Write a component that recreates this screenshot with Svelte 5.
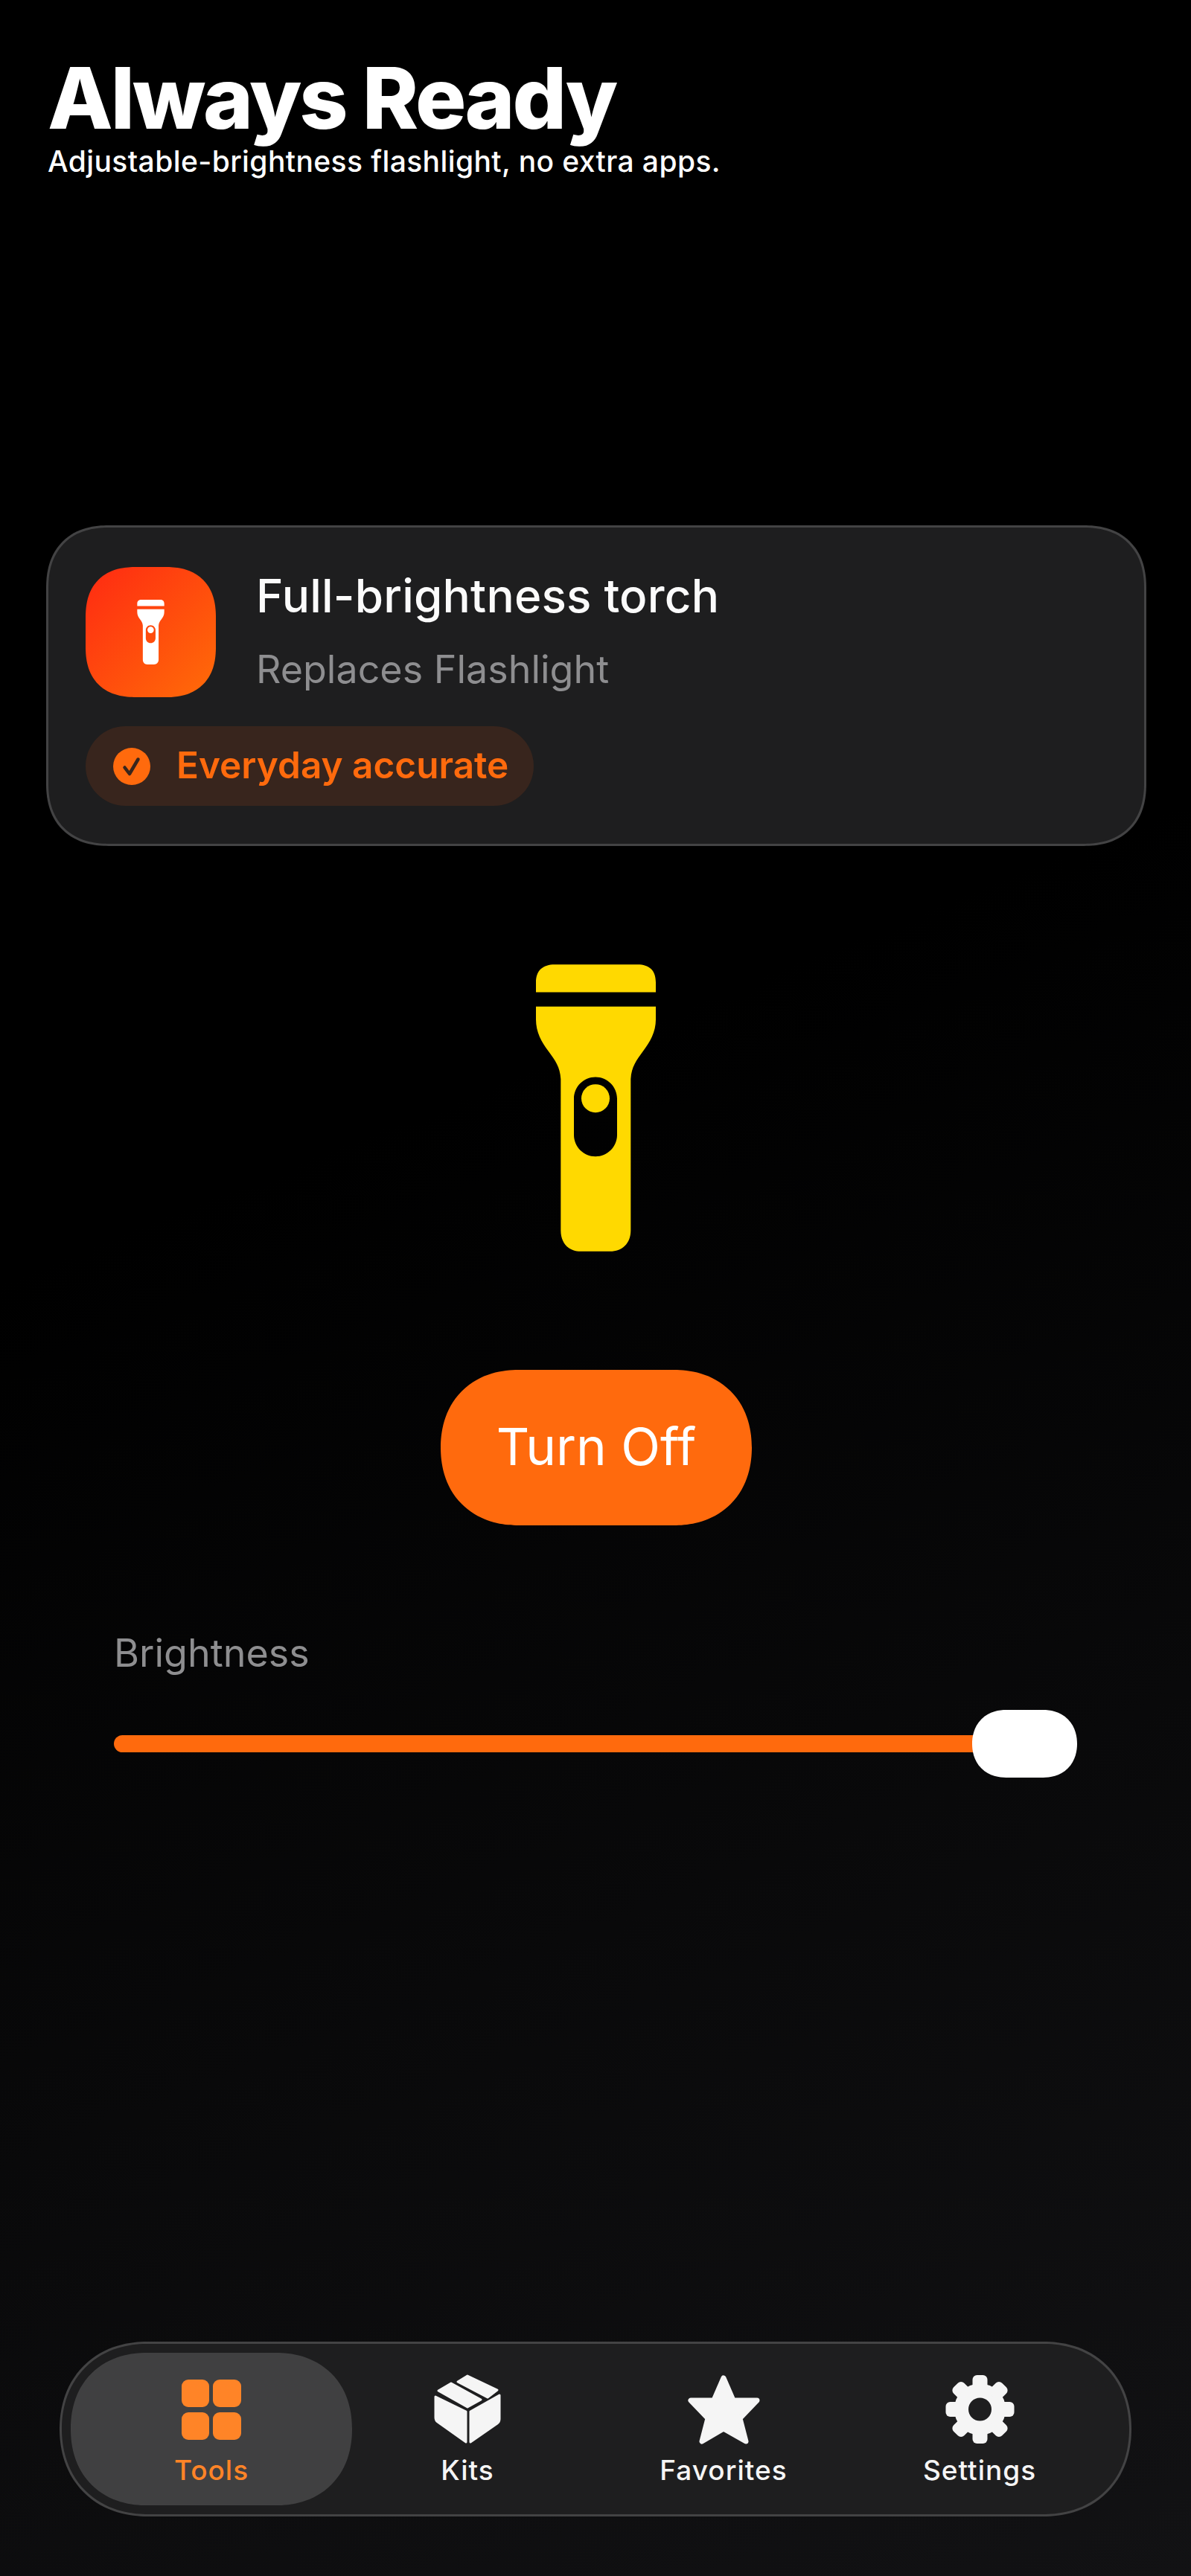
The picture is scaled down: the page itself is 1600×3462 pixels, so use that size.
<script>
  const tabs = [
    { id: 'tools', label: 'Tools', active: true },
    { id: 'kits', label: 'Kits' },
    { id: 'star', label: 'Favorites' },
    { id: 'gear', label: 'Settings' }
  ];
  const teeth = [0, 45, 90, 135, 180, 225, 270, 315];
  const torch = 'M180 190V150C180 100 210 78 255 78H590C635 78 663 100 663 150V190ZM180 248H663V300C663 350 640 390 610 430C585 465 565 490 562 540V1150C562 1205 525 1235 480 1235H360C315 1235 280 1205 280 1150V540C277 490 257 465 232 430C202 390 180 350 180 300ZM420 532C372 532 333 571 333 619V765C333 813 372 852 420 852C468 852 507 813 507 765V619C507 571 468 532 420 532Z';
</script>

<div class="page">
  <header>
    <h1>Always Ready</h1>
    <p>Adjustable-brightness flashlight, no extra apps.</p>
  </header>

  <section class="card">
    <div class="top">
      <div class="app">
        <svg class="mini" viewBox="180 78 483 1157"><path d={torch} fill="#fff" fill-rule="evenodd" /><circle cx="420" cy="618" r="57" fill="#fff" /></svg>
      </div>
      <div class="txt">
        <h2>Full-brightness torch</h2>
        <p>Replaces Flashlight</p>
      </div>
    </div>
    <div class="badge">
      <svg viewBox="0 0 50 50" class="chk"><circle cx="25" cy="25" r="25" fill="#ff6a0d" /><path d="M15.5 26.5 22 35 33.5 15.5" fill="none" stroke="#38251d" stroke-width="4.5" stroke-linecap="round" stroke-linejoin="round" /></svg>
      <span>Everyday accurate</span>
    </div>
  </section>

  <svg class="torch" viewBox="180 78 483 1157"><path d={torch} fill="#ffd900" fill-rule="evenodd" /><circle cx="420" cy="618" r="57" fill="#ffd900" /></svg>

  <button class="btn">Turn Off</button>

  <section class="bright">
    <div class="lbl">Brightness</div>
    <div class="slider"><div class="track"></div><div class="thumb"></div></div>
  </section>

  <nav>
    {#each tabs as t}
      <div class="tab" class:active={t.active}>
        <div class="ico">
          {#if t.id === 'tools'}
            <svg width="80" height="81" viewBox="0 0 80 81" fill="#ff8427"><rect width="37" height="37" rx="9" /><rect x="42" width="38" height="37" rx="9" /><rect y="44" width="37" height="37" rx="9" /><rect x="42" y="44" width="38" height="37" rx="9" /></svg>
          {:else if t.id === 'kits'}
            <svg width="90" height="94" viewBox="0 0 90 94" fill="#f5f5f5" stroke="#f5f5f5" stroke-width="3" stroke-linejoin="round"><path d="M32 10 45 2 85 21 72 31Z" /><path d="M6 22 23 12 63 34 45 44Z" /><path d="M2 30 43 50V91L5 64C2 62 2 60 2 58Z" /><path d="M88 28 49 50V91L85 66C88 64 88 62 88 60Z" /></svg>
          {:else if t.id === 'star'}
            <svg width="97" height="93" viewBox="0 0 97 93" fill="#f5f5f5" stroke="#f5f5f5" stroke-width="7" stroke-linejoin="round"><path d="M48 4 61 34H93L70 58 78 89 48 72 19 89 27 58 4 34H35Z" /></svg>
          {:else}
            <svg width="93" height="92" viewBox="-46.5 -46 93 92"><circle r="25" fill="none" stroke="#f5f5f5" stroke-width="19" />{#each teeth as a}<rect x="-10" y="-46" width="20" height="22" rx="6" fill="#f5f5f5" transform="rotate({a})" />{/each}</svg>
          {/if}
        </div>
        <span>{t.label}</span>
      </div>
    {/each}
  </nav>
</div>

<style>
  :global(body) { margin: 0; background: #000; }
  .page {
    box-sizing: border-box;
    width: 1600px;
    height: 3462px;
    display: flex;
    flex-direction: column;
    font-family: Inter, "Noto Sans", sans-serif;
    color: #fff;
    background: linear-gradient(158deg, #000 42%, #121214 100%);
    overflow: hidden;
  }
  header { padding: 75px 0 0 64px; }
  h1 { margin: 0; font-size: 114px; line-height: 114px; font-weight: 800; letter-spacing: -3px; }
  header p { margin: 6px 0 0; font-size: 39px; line-height: 44px; font-weight: 500; letter-spacing: 0.4px; }

  .card {
    box-sizing: border-box;
    margin: 467px 60px 0 62px;
    height: 431px;
    padding: 53px 50px;
    background: #1e1e1f;
    border: 3px solid #434344;
    border-radius: 84px;
    corner-shape: superellipse(1.2);
  }
  .top { display: flex; gap: 54px; }
  .app {
    width: 175px;
    height: 175px;
    border-radius: 68px;
    corner-shape: superellipse(1.25);
    background: linear-gradient(135deg, #ff2a12, #ff6c08);
    display: flex;
    align-items: center;
    justify-content: center;
  }
  .mini { width: 37px; height: 87px; margin-left: -1px; }
  .txt { display: flex; flex-direction: column; }
  h2 { margin: 1px 0 0; font-size: 62px; line-height: 76px; font-weight: 500; color: #fbfbfb; letter-spacing: 0.2px; }
  .txt p { margin: 31px 0 0; font-size: 52px; line-height: 60px; font-weight: 400; color: #8e8e90; }
  .badge {
    box-sizing: border-box;
    margin-top: 39px;
    width: 602px;
    height: 107px;
    border-radius: 54px;
    background: #38251d;
    display: flex;
    align-items: center;
    gap: 35px;
    padding-left: 37px;
    color: #ff6a0d;
    font-size: 49.5px;
    font-weight: 600;
  }
  .badge span { margin-top: -4px; }
  .chk { width: 50px; height: 50px; }

  .torch { display: block; width: 161px; height: 386px; margin: 159px auto 0 720px; }

  .btn {
    display: block;
    width: 418px;
    height: 209px;
    margin: 159px 0 0 592px;
    padding: 0 0 3px;
    border: 0;
    border-radius: 105px;
    corner-shape: superellipse(1.12);
    background: #ff6a0d;
    color: #fff;
    font-family: inherit;
    font-size: 69px;
    font-weight: 400;
  }

  .bright { padding: 0 153px; margin-top: 141px; }
  .lbl { font-size: 52px; line-height: 62px; color: #8e8e90; margin-left: 0; }
  .slider { position: relative; height: 91px; margin-top: 45px; display: flex; align-items: center; }
  .track { width: 1200px; height: 23px; border-radius: 12px; background: #ff6a0d; }
  .thumb {
    position: absolute;
    left: 1153px;
    top: 0;
    width: 141px;
    height: 91px;
    border-radius: 46px;
    corner-shape: superellipse(1.12);
    background: #fff;
  }

  nav {
    box-sizing: border-box;
    margin: 758px 80px 0;
    height: 235px;
    display: grid;
    grid-template-columns: repeat(4, 344px);
    justify-content: center;
    padding: 12px 0;
    background: #1e1e1f;
    border: 3px solid #434344;
    border-radius: 118px;
    corner-shape: superellipse(1.1);
  }
  .tab { display: flex; flex-direction: column; align-items: center; color: #f5f5f5; font-size: 37px; font-weight: 500; letter-spacing: 1px; }
  .tab.active { margin: 0 -17px; background: #404041; border-radius: 102px; corner-shape: superellipse(1.12); color: #ff8427; }
  .ico { height: 94px; margin-top: 29px; display: flex; align-items: center; justify-content: center; }
  .tab span { margin-top: 13px; line-height: 44px; }
</style>
